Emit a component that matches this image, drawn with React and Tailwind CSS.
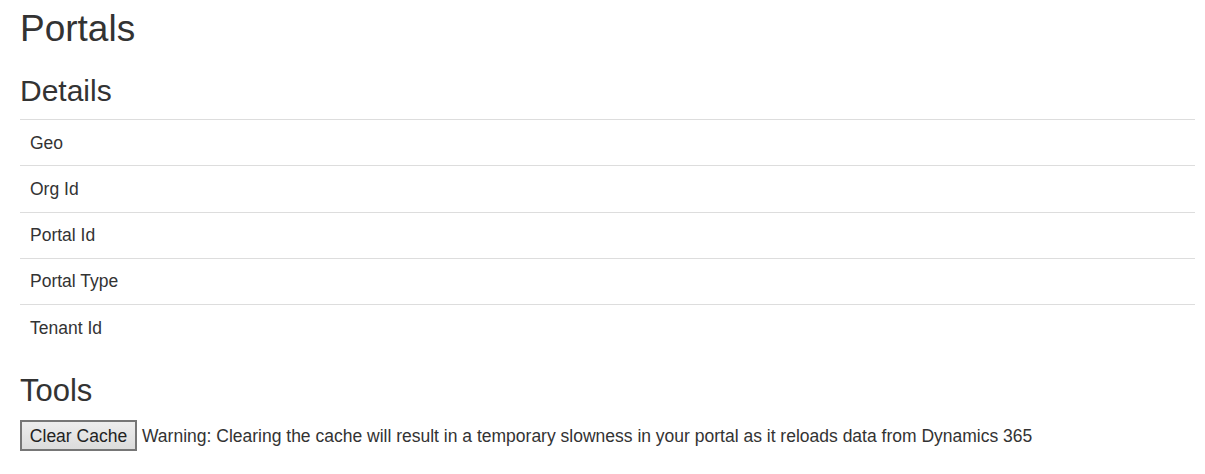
const rows = ["Geo", "Org Id", "Portal Id", "Portal Type", "Tenant Id"]

const App = () => {
  return (
    <div className="min-h-screen bg-white px-[20px] pr-[10px] text-[#333] font-['Liberation_Sans',Arial,sans-serif]">
      <h1 className="pt-[7px] text-[37px] leading-[44px]">Portals</h1>
      <h2 className="mt-[23px] text-[30px] leading-[33px]">Details</h2>
      <div className="mt-[12px]">
        {rows.map((r) => (
          <div key={r} className="h-[46.25px] border-t border-[#ddd] px-[10px] flex items-center text-[17.5px]">
            {r}
          </div>
        ))}
      </div>
      <h2 className="mt-[24px] text-[31px] leading-[33px]">Tools</h2>
      <div className="mt-[13px] flex items-center text-[17.5px]">
        <button className="h-[31px] w-[117px] border-2 border-[#767676] bg-gradient-to-b from-[#ededed] to-[#dcdcdc] text-[17.5px] text-[#222]">
          Clear Cache
        </button>
        <span className="ml-[5px]">Warning: Clearing the cache will result in a temporary slowness in your portal as it reloads data from Dynamics 365</span>
      </div>
    </div>
  )
}

export default App
